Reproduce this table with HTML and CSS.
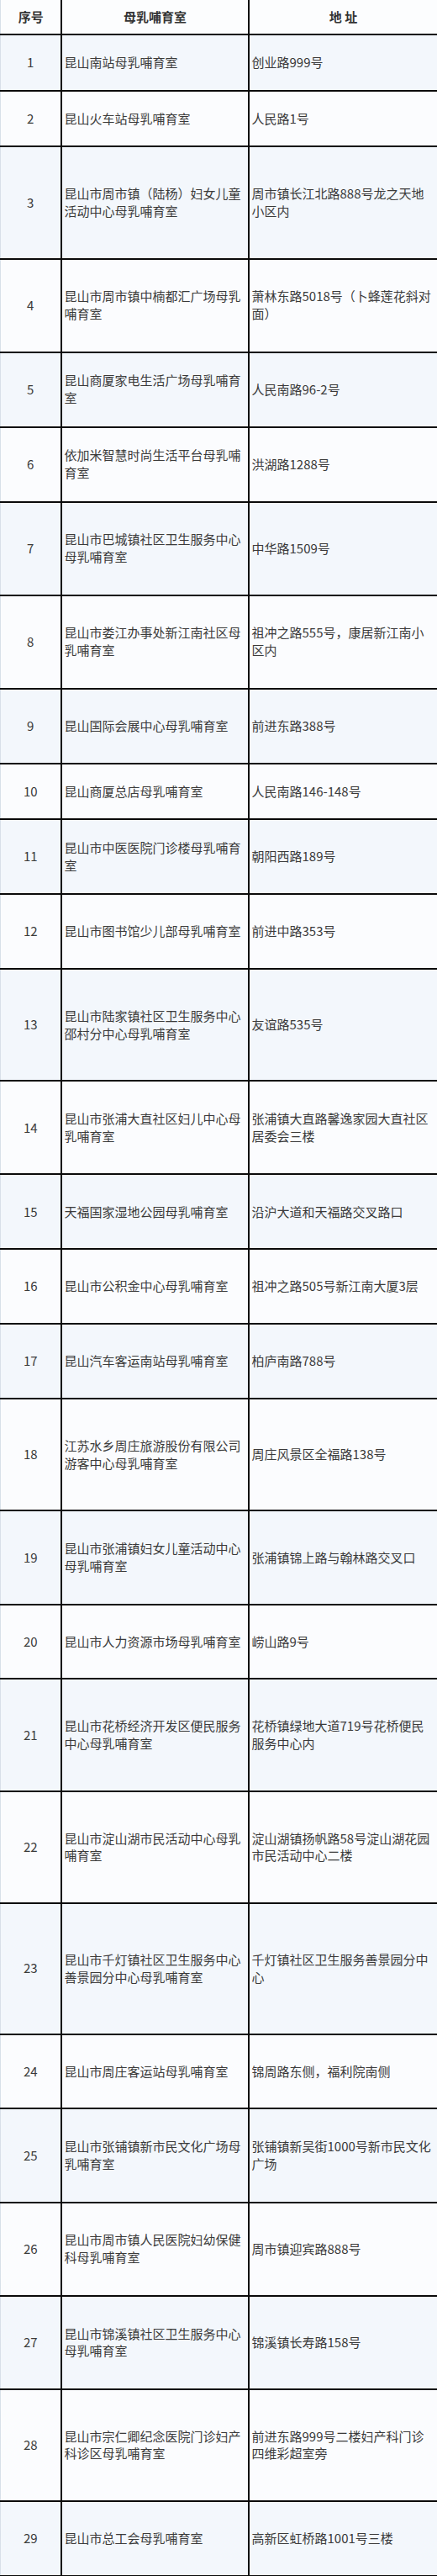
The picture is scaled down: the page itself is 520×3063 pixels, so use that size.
FILE: index.html
```html
<!DOCTYPE html>
<html lang="zh-CN">
<head>
<meta charset="utf-8">
<title>昆山市母乳哺育室</title>
<link rel="stylesheet" href="styles.css">
</head>
<body>
<table class="list">
  <colgroup>
    <col class="col-no">
    <col class="col-name">
    <col class="col-addr">
  </colgroup>
  <thead>
    <tr class="head">
      <th>序号</th>
      <th>母乳哺育室</th>
      <th>地&nbsp;址</th>
    </tr>
  </thead>
  <tbody>
    <tr class="u3"><td class="no">1</td><td>昆山南站母乳哺育室</td><td>创业路999号</td></tr>
    <tr class="u3"><td class="no">2</td><td>昆山火车站母乳哺育室</td><td>人民路1号</td></tr>
    <tr class="u6"><td class="no">3</td><td>昆山市周市镇（陆杨）妇女儿童活动中心母乳哺育室</td><td>周市镇长江北路888号龙之天地小区内</td></tr>
    <tr class="u5"><td class="no">4</td><td>昆山市周市镇中楠都汇广场母乳哺育室</td><td>萧林东路5018号（卜蜂莲花斜对面）</td></tr>
    <tr class="u4"><td class="no">5</td><td>昆山商厦家电生活广场母乳哺育室</td><td>人民南路96-2号</td></tr>
    <tr class="u4"><td class="no">6</td><td>依加米智慧时尚生活平台母乳哺育室</td><td>洪湖路1288号</td></tr>
    <tr class="u5"><td class="no">7</td><td>昆山市巴城镇社区卫生服务中心母乳哺育室</td><td>中华路1509号</td></tr>
    <tr class="u5"><td class="no">8</td><td>昆山市娄江办事处新江南社区母乳哺育室</td><td>祖冲之路555号，康居新江南小区内</td></tr>
    <tr class="u4"><td class="no">9</td><td>昆山国际会展中心母乳哺育室</td><td>前进东路388号</td></tr>
    <tr class="u3"><td class="no">10</td><td>昆山商厦总店母乳哺育室</td><td>人民南路146-148号</td></tr>
    <tr class="u4"><td class="no">11</td><td>昆山市中医医院门诊楼母乳哺育室</td><td>朝阳西路189号</td></tr>
    <tr class="u4"><td class="no">12</td><td>昆山市图书馆少儿部母乳哺育室</td><td>前进中路353号</td></tr>
    <tr class="u6"><td class="no">13</td><td>昆山市陆家镇社区卫生服务中心邵村分中心母乳哺育室</td><td>友谊路535号</td></tr>
    <tr class="u5"><td class="no">14</td><td>昆山市张浦大直社区妇儿中心母乳哺育室</td><td>张浦镇大直路馨逸家园大直社区居委会三楼</td></tr>
    <tr class="u4"><td class="no">15</td><td>天福国家湿地公园母乳哺育室</td><td>沿沪大道和天福路交叉路口</td></tr>
    <tr class="u4"><td class="no">16</td><td>昆山市公积金中心母乳哺育室</td><td>祖冲之路505号新江南大厦3层</td></tr>
    <tr class="u4"><td class="no">17</td><td>昆山汽车客运南站母乳哺育室</td><td>柏庐南路788号</td></tr>
    <tr class="u6"><td class="no">18</td><td>江苏水乡周庄旅游股份有限公司游客中心母乳哺育室</td><td>周庄风景区全福路138号</td></tr>
    <tr class="u5"><td class="no">19</td><td>昆山市张浦镇妇女儿童活动中心母乳哺育室</td><td>张浦镇锦上路与翰林路交叉口</td></tr>
    <tr class="u4"><td class="no">20</td><td>昆山市人力资源市场母乳哺育室</td><td>崂山路9号</td></tr>
    <tr class="u6"><td class="no">21</td><td>昆山市花桥经济开发区便民服务中心母乳哺育室</td><td>花桥镇绿地大道719号花桥便民服务中心内</td></tr>
    <tr class="u6"><td class="no">22</td><td>昆山市淀山湖市民活动中心母乳哺育室</td><td>淀山湖镇扬帆路58号淀山湖花园市民活动中心二楼</td></tr>
    <tr class="u7"><td class="no">23</td><td>昆山市千灯镇社区卫生服务中心善景园分中心母乳哺育室</td><td>千灯镇社区卫生服务善景园分中心</td></tr>
    <tr class="u4"><td class="no">24</td><td>昆山市周庄客运站母乳哺育室</td><td>锦周路东侧，福利院南侧</td></tr>
    <tr class="u5"><td class="no">25</td><td>昆山市张铺镇新市民文化广场母乳哺育室</td><td>张铺镇新吴街1000号新市民文化广场</td></tr>
    <tr class="u5"><td class="no">26</td><td>昆山市周市镇人民医院妇幼保健科母乳哺育室</td><td>周市镇迎宾路888号</td></tr>
    <tr class="u5"><td class="no">27</td><td>昆山市锦溪镇社区卫生服务中心母乳哺育室</td><td>锦溪镇长寿路158号</td></tr>
    <tr class="u6"><td class="no">28</td><td>昆山市宗仁卿纪念医院门诊妇产科诊区母乳哺育室</td><td>前进东路999号二楼妇产科门诊四维彩超室旁</td></tr>
    <tr class="u4"><td class="no">29</td><td>昆山市总工会母乳哺育室</td><td>高新区虹桥路1001号三楼</td></tr>
  </tbody>
</table>
</body>
</html>
```

FILE: styles.css
```css
html, body {
  margin: 0;
  padding: 0;
  background: #ffffff;
}

.list {
  width: 520px;
  border-collapse: collapse;
  table-layout: fixed;
  font-family: "Noto Sans CJK SC", "Noto Sans", sans-serif;
  font-size: 15px;
  line-height: 20.7px;
  color: #3a3a3a;
  border-left: 1px solid #d8e0e9;
}

.col-no { width: 72px; }
.col-name { width: 223px; }
.col-addr { width: 225px; }

.list th,
.list td {
  border: 2px solid #0a0a0a;
  padding: 0 2px 0 3px;
  vertical-align: middle;
  text-align: left;
  font-weight: normal;
}

.list th:first-child,
.list td:first-child {
  border-left: 1px solid #d8e0e9;
}

.list th {
  border-top: none;
  text-align: center;
  font-weight: bold;
  color: #333333;
}

.list .no {
  text-align: center;
  padding: 0;
}

.head { height: 41px; background: #fcfdfe; }

.list tbody tr:nth-child(odd) { background: #f3f7fc; }
.list tbody tr:nth-child(even) { background: #fbfcfe; }

.u3 { height: 66.67px; }
.u4 { height: 88.89px; }
.u5 { height: 111.11px; }
.u6 { height: 133.33px; }
.u7 { height: 155.56px; }
```
